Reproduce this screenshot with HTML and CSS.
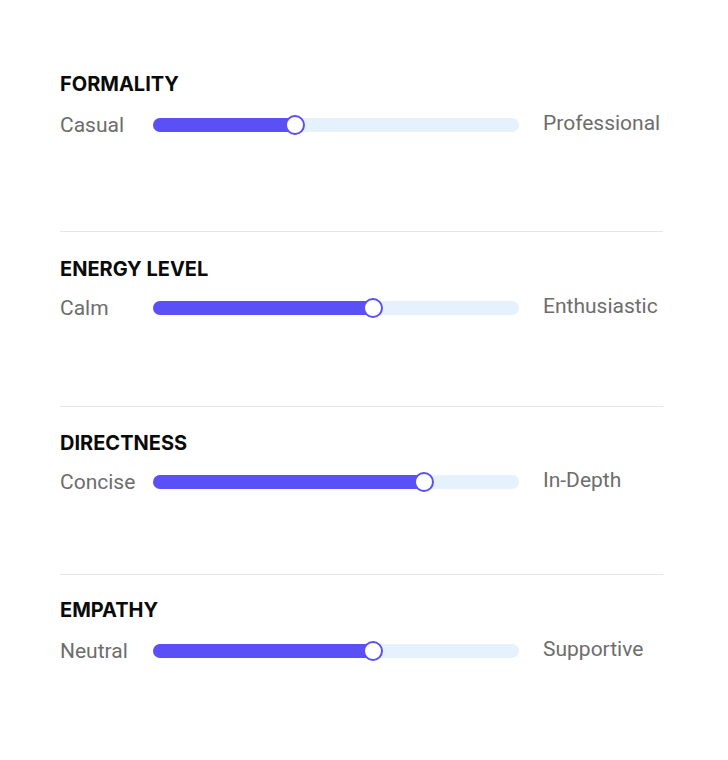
FILE: index.html
```html
<!DOCTYPE html>
<html>
<head>
<meta charset="utf-8">
<link rel="stylesheet" href="styles.css">
</head>
<body>
<div class="panel">
  <section class="group group-1">
    <h2 class="title">FORMALITY</h2>
    <div class="row">
      <span class="lo">Casual</span>
      <div class="track"><div class="fill" style="width: 142px"><span class="thumb"></span></div></div>
      <span class="hi">Professional</span>
    </div>
  </section>
  <section class="group group-2">
    <h2 class="title">ENERGY LEVEL</h2>
    <div class="row">
      <span class="lo">Calm</span>
      <div class="track"><div class="fill" style="width: 220px"><span class="thumb"></span></div></div>
      <span class="hi">Enthusiastic</span>
    </div>
  </section>
  <section class="group group-3">
    <h2 class="title">DIRECTNESS</h2>
    <div class="row">
      <span class="lo">Concise</span>
      <div class="track"><div class="fill" style="width: 271px"><span class="thumb"></span></div></div>
      <span class="hi">In-Depth</span>
    </div>
  </section>
  <section class="group group-4">
    <h2 class="title">EMPATHY</h2>
    <div class="row">
      <span class="lo">Neutral</span>
      <div class="track"><div class="fill" style="width: 220px"><span class="thumb"></span></div></div>
      <span class="hi">Supportive</span>
    </div>
  </section>
</div>
</body>
</html>
```
FILE: styles.css
```css
html, body {
  margin: 0;
  padding: 0;
  background: #ffffff;
}
.panel {
  width: 603px;
  margin-left: 60px;
  padding-top: 72px;
  display: flex;
  flex-direction: column;
}
.group {
  border-bottom: 1px solid #e6e6e6;
}
.group-1 { padding-bottom: 94px; }
.group-2 { padding-top: 25px; padding-bottom: 86px; }
.group-3 { padding-top: 24px; padding-bottom: 80px; }
.group-4 { padding-top: 23px; border-bottom: none; }
.title {
  margin: 0 0 17px 0;
  font-family: Inter, "Liberation Sans", sans-serif;
  font-weight: 700;
  font-size: 20px;
  line-height: 24px;
  color: #0a0a0a;
  letter-spacing: 0;
}
.group-2 .title,
.group-3 .title {
  margin-bottom: 15px;
}
.row {
  display: flex;
  align-items: center;
  height: 24px;
}
.lo, .hi {
  font-family: Roboto, "Liberation Sans", sans-serif;
  font-size: 21px;
  line-height: 24px;
  color: #6d6d6d;
  white-space: nowrap;
}
.lo {
  width: 93px;
  flex: none;
}
.hi {
  margin-left: 24px;
  position: relative;
  top: -2px;
}
.track {
  width: 366px;
  height: 14px;
  flex: none;
  border-radius: 7px;
  background: #e5f1fd;
  display: flex;
}
.fill {
  height: 14px;
  border-radius: 7px;
  background: #5b50f6;
  position: relative;
}
.thumb {
  position: absolute;
  right: -10px;
  top: -3px;
  width: 16px;
  height: 16px;
  border: 2px solid #5b50f6;
  border-radius: 50%;
  background: #ffffff;
}
```
